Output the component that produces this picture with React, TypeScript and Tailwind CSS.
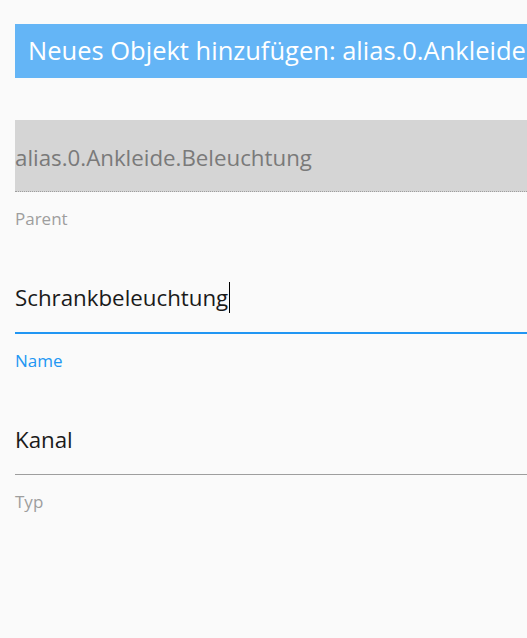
import React from "react";

const font = { fontFamily: '"Segoe UI", "Open Sans", "Noto Sans", sans-serif' };

export default function App() {
  return (
    <div
      className="w-[527px] h-[638px] overflow-hidden bg-[#fafafa] pl-[15px] pt-[24px]"
      style={font}
    >
      {/* Dialog title */}
      <div className="w-[700px] h-[54px] bg-[#64b5f6] flex items-center pl-[13px]">
        <span className="text-[25.5px] text-white whitespace-nowrap leading-none">
          Neues Objekt hinzufügen: alias.0.Ankleide.Beleuchtung.Schrankbeleuchtung
        </span>
      </div>

      {/* Parent (disabled) */}
      <div className="mt-[42px] w-[600px]">
        <div className="h-[72px] bg-[#d5d5d5] border-b border-dotted border-[#9e9e9e] flex items-center pt-[4px]">
          <span className="text-[22.3px] text-[#7a7a7a] whitespace-nowrap">
            alias.0.Ankleide.Beleuchtung
          </span>
        </div>
        <div className="h-[40px] pt-[18px] text-[17px] leading-[18px] text-[#9e9e9e]">Parent</div>
      </div>

      {/* Name (focused) */}
      <div className="mt-[29px] w-[600px]">
        <div className="h-[73px] border-b-2 border-[#2196f3] flex items-center pt-[2px]">
          <span className="text-[22.3px] text-[#1a1a1a] whitespace-nowrap">Schrankbeleuchtung</span>
          <span className="w-px h-[31px] bg-black ml-px" />
        </div>
        <div className="h-[40px] pt-[18px] text-[17px] leading-[18px] text-[#2196f3]">Name</div>
      </div>

      {/* Typ */}
      <div className="mt-[29px] w-[600px]">
        <div className="h-[72px] border-b border-[#9e9e9e] flex items-center pt-[2px]">
          <span className="text-[22.3px] text-[#1a1a1a] whitespace-nowrap">Kanal</span>
        </div>
        <div className="h-[40px] pt-[18px] text-[17px] leading-[18px] text-[#9e9e9e]">Typ</div>
      </div>
    </div>
  );
}
